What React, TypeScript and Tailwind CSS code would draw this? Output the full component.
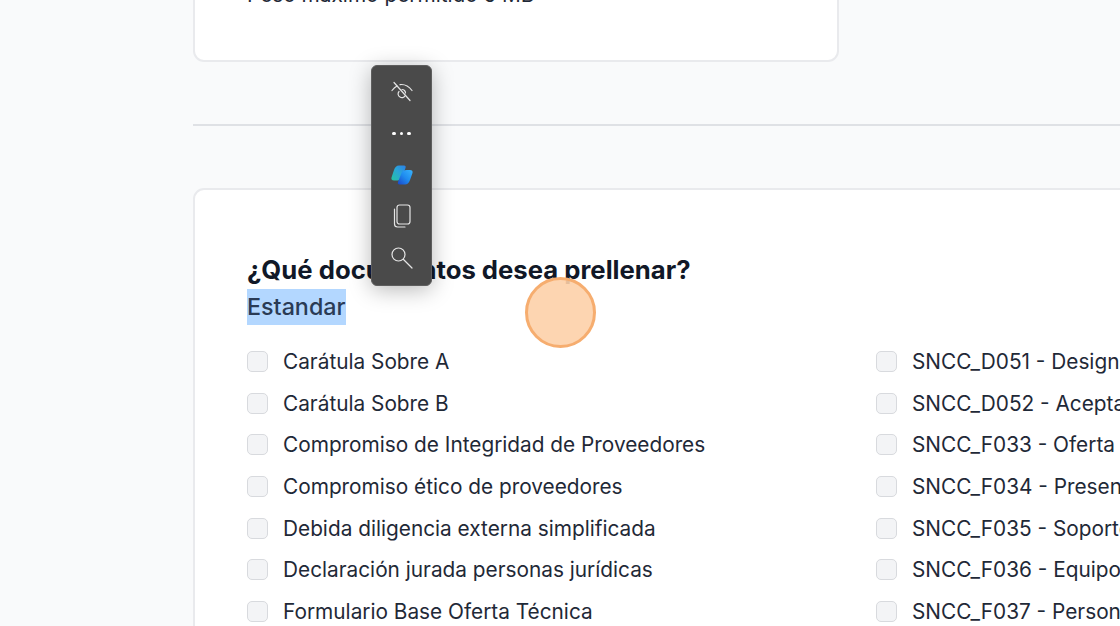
const leftDocs = [
  "Carátula Sobre A",
  "Carátula Sobre B",
  "Compromiso de Integridad de Proveedores",
  "Compromiso ético de proveedores",
  "Debida diligencia externa simplificada",
  "Declaración jurada personas jurídicas",
  "Formulario Base Oferta Técnica",
];

const rightDocs = [
  "SNCC_D051 - Designación de representante",
  "SNCC_D052 - Aceptación de la adjudicación",
  "SNCC_F033 - Oferta económica del proveedor",
  "SNCC_F034 - Presentación de oferta",
  "SNCC_F035 - Soporte técnico ofertado",
  "SNCC_F036 - Equipo del oferente",
  "SNCC_F037 - Personal de plantilla",
];

function DocRow({ label }: { label: string }) {
  return (
    <div className="flex h-[41.6px] items-center gap-[15px] whitespace-nowrap">
      <span className="h-[21px] w-[21px] shrink-0 rounded-[5px] border-[1.5px] border-[#d8dade] bg-[#f3f4f6]" />
      <span className="text-[20.8px] text-[#1f2937]">{label}</span>
    </div>
  );
}

function ToolSlot({ children }: { children: React.ReactNode }) {
  return <div className="flex h-[41.5px] w-full items-center justify-center">{children}</div>;
}

function EyeOff() {
  return (
    <svg width="22" height="22" viewBox="0 0 22 22" fill="none" stroke="#e5e5e5" strokeWidth="1.2" strokeLinecap="round">
      <path d="M1 9.5C3 7 4.500 5.800 6 5" />
      <path d="M9 3.600C14 3 18 5.500 21 9.500" />
      <path d="M8 10.500a3.500 3.500 0 0 0 1 5.500a3.500 3.500 0 0 0 5-1" />
      <path d="M11 8.500a3.500 3.500 0 0 1 3.500 3.500" />
      <path d="M3 1.500L19 19.500" />
    </svg>
  );
}

function Copilot() {
  return (
    <svg width="22" height="20" viewBox="0 0 22 20">
      <defs>
        <linearGradient id="cpA" x1="0" y1="1" x2="1" y2="0">
          <stop offset="0" stopColor="#25c4a0" />
          <stop offset="0.55" stopColor="#2aa5d8" />
          <stop offset="1" stopColor="#2b7fe8" />
        </linearGradient>
        <linearGradient id="cpB" x1="0" y1="1" x2="1" y2="0">
          <stop offset="0" stopColor="#1a45c8" />
          <stop offset="0.5" stopColor="#1f8cf0" />
          <stop offset="1" stopColor="#3ab4fc" />
        </linearGradient>
      </defs>
      <path d="M8 0.500H13C14.500 0.500 15 1.500 14.500 3L11 12C10 14.500 8.500 15.500 6.500 15.500H3C1 15.500 0 14.500 0.500 12.500L3 5C4 2 5.500 0.500 8 0.500Z" fill="url(#cpA)" />
      <path d="M15.500 5H19C21 5 22 6 21.500 8L19 15C18 18 16 19.500 14 19.500H8.500C7 19.500 6.500 18.500 7 17L10.500 8C11.500 6 13 5 15.500 5Z" fill="url(#cpB)" />
    </svg>
  );
}

function CopyPages() {
  return (
    <svg width="18" height="24" viewBox="0 0 18 24" fill="none" stroke="#e5e5e5" strokeWidth="1.2">
      <rect x="4" y="1" width="13" height="19" rx="2.500" />
      <path d="M1.500 5V20a3 3 0 0 0 3 3H12" strokeLinecap="round" />
    </svg>
  );
}

function SearchLens() {
  return (
    <svg width="22" height="22" viewBox="0 0 22 22" fill="none" stroke="#e5e5e5" strokeWidth="1.200" strokeLinecap="round">
      <circle cx="7.500" cy="7.500" r="6.500" />
      <path d="M12.500 12.500L21 21" />
    </svg>
  );
}

export default function App() {
  return (
    <div className="relative h-[626px] w-[1120px] overflow-hidden bg-[#f9fafb] font-['Inter',sans-serif]">
      <div className="-mt-[60px] pl-[193px]">
        <div className="h-[122px] w-[646px] rounded-[11px] border-2 border-[#e9eaed] bg-white px-[52px] pt-[37px]">
          <p className="text-[20.8px] text-[#1f2937]">Peso máximo permitido 5 MB</p>
        </div>
        <div className="mt-[62px] h-[2px] bg-[#dfe1e5]" />
        <div className="mt-[62px] w-[1100px] rounded-[11px] border-2 border-[#e9eaed] bg-white px-[52px] pb-[40px] pt-[62px]">
          <h2 className="text-[25.7px] leading-[36px] font-bold text-[#111827]">¿Qué documentos desea prellenar?</h2>
          <p className="mt-px text-[23.3px] leading-[36px] font-medium text-[#2a3b55]">
            <span className="inline-block bg-[#b3d7ff]">Estandar</span>
          </p>
          <div className="mt-[16px] flex">
            <div className="w-[629px] shrink-0">
              {leftDocs.map((doc) => (
                <DocRow key={doc} label={doc} />
              ))}
            </div>
            <div>
              {rightDocs.map((doc) => (
                <DocRow key={doc} label={doc} />
              ))}
            </div>
          </div>
        </div>
      </div>

      <div className="absolute left-[371px] top-[65px] flex h-[221px] w-[61px] flex-col items-center rounded-[6px] border border-[#5e5e5e] bg-[#4a4a4a] pt-[5px] shadow-[0_4px_22px_rgba(0,0,0,0.28)]">
        <ToolSlot>
          <EyeOff />
        </ToolSlot>
        <ToolSlot>
          <div className="flex items-center gap-[4px]">
            <span className="h-[3.5px] w-[3.5px] rounded-full bg-white" />
            <span className="h-[3.5px] w-[3.5px] rounded-full bg-white" />
            <span className="h-[3.5px] w-[3.5px] rounded-full bg-white" />
          </div>
        </ToolSlot>
        <ToolSlot>
          <Copilot />
        </ToolSlot>
        <ToolSlot>
          <CopyPages />
        </ToolSlot>
        <ToolSlot>
          <SearchLens />
        </ToolSlot>
      </div>

      <div className="absolute left-[525px] top-[277px] h-[71px] w-[71px] rounded-full border-[3px] border-[#f6ad6f] bg-[#fdd0a8]/90" />
    </div>
  );
}
